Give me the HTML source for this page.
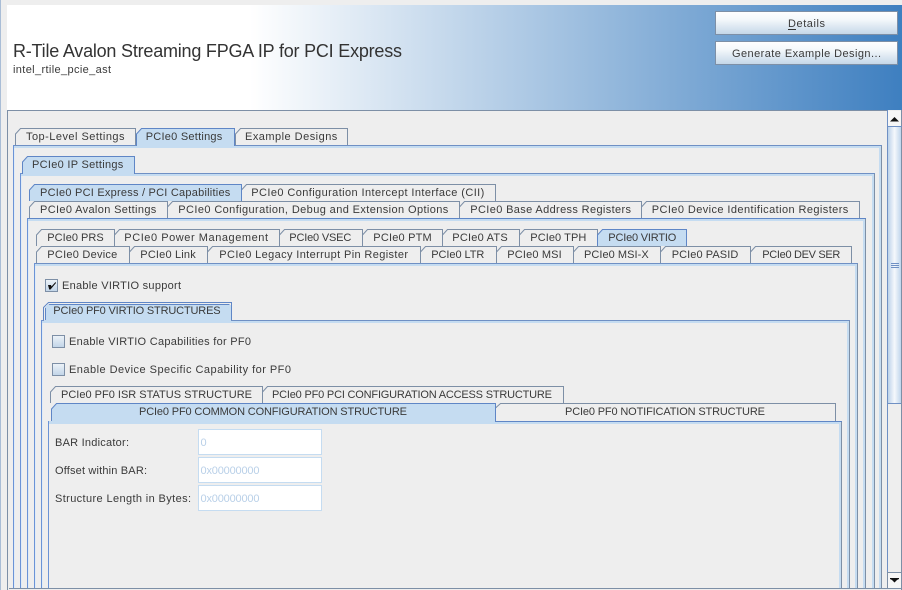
<!DOCTYPE html>
<html><head><meta charset="utf-8"><style>
html,body{margin:0;padding:0;background:#eee;width:902px;height:590px;overflow:hidden}
svg{display:block;font-family:"Liberation Sans",sans-serif;font-size:11px;fill:#3a3a3a}
.t{fill:#eee;stroke:#7d8fa6;stroke-width:1}
.s{fill:#c5dcf1;stroke:#5f86c6;stroke-width:1}
</style></head><body>
<svg width="902" height="590" viewBox="0 0 902 590" xmlns="http://www.w3.org/2000/svg">
<defs>
<linearGradient id="h" gradientUnits="userSpaceOnUse" x1="250" y1="0" x2="902" y2="0"><stop offset="0" stop-color="#fff"/><stop offset="1" stop-color="#3e7fc0"/></linearGradient>
<linearGradient id="b" x1="0" y1="0" x2="0" y2="1"><stop offset="0" stop-color="#fff"/><stop offset="0.35" stop-color="#f4f8fb"/><stop offset="1" stop-color="#c3d6e8"/></linearGradient>
<linearGradient id="c" x1="0" y1="0" x2="0" y2="1"><stop offset="0" stop-color="#eef3f8"/><stop offset="1" stop-color="#c0d4e8"/></linearGradient>
<linearGradient id="th" x1="0" y1="0" x2="1" y2="0"><stop offset="0" stop-color="#bcd2ea"/><stop offset="0.5" stop-color="#f5f8fc"/><stop offset="1" stop-color="#c0d5ec"/></linearGradient>
</defs>
<rect width="902" height="590" fill="#eee"/>
<rect x="0" y="0" width="1" height="590" fill="#a9bdd6"/>
<rect x="7" y="5" width="895" height="105" fill="url(#h)"/>
<rect x="7" y="5" width="243" height="105" fill="#fff"/>
<rect x="7" y="110" width="894" height="1" fill="#7d8fa6"/>
<rect x="7" y="110" width="1" height="480" fill="#7d8fa6"/>

<text x="13" y="57" textLength="389" style="font-size:18px;fill:#333">R-Tile Avalon Streaming FPGA IP for PCI Express</text>
<text x="13" y="73" textLength="98">intel_rtile_pcie_ast</text>

<rect x="715.5" y="11.5" width="182" height="23" fill="url(#b)" stroke="#7d8fa6"/>
<text x="788" y="27" textLength="37">Details</text>
<rect x="788" y="29" width="8" height="1" fill="#333"/>
<rect x="715.5" y="41.5" width="182" height="23" fill="url(#b)" stroke="#7d8fa6"/>
<text x="732" y="57" textLength="149">Generate Example Design...</text>

<g shape-rendering="crispEdges">
<rect x="13" y="145" width="869" height="443" fill="#7d8fa6"/><rect x="14" y="146" width="867" height="442" fill="#c5dcf1"/><rect x="15" y="148" width="864" height="440" fill="#eee"/><rect x="14" y="148" width="1" height="440" fill="#e0ebf6"/><rect x="13" y="145" width="869" height="1" fill="#6f90c4"/><rect x="13" y="145" width="1" height="443" fill="#6b93d6"/>
<rect x="20" y="173" width="855" height="415" fill="#7d8fa6"/><rect x="21" y="174" width="853" height="414" fill="#c5dcf1"/><rect x="22" y="176" width="850" height="412" fill="#eee"/><rect x="21" y="176" width="1" height="412" fill="#e0ebf6"/><rect x="20" y="173" width="855" height="1" fill="#6f90c4"/><rect x="20" y="173" width="1" height="415" fill="#6b93d6"/>
<rect x="27" y="218" width="839" height="370" fill="#7d8fa6"/><rect x="28" y="219" width="837" height="369" fill="#c5dcf1"/><rect x="29" y="221" width="834" height="367" fill="#eee"/><rect x="28" y="221" width="1" height="367" fill="#e0ebf6"/><rect x="27" y="218" width="839" height="1" fill="#5f86c6"/><rect x="27" y="218" width="1" height="370" fill="#6b93d6"/>
<rect x="34" y="263" width="824" height="325" fill="#7d8fa6"/><rect x="35" y="264" width="822" height="324" fill="#c5dcf1"/><rect x="36" y="266" width="819" height="322" fill="#eee"/><rect x="35" y="266" width="1" height="322" fill="#e0ebf6"/><rect x="34" y="263" width="824" height="1" fill="#6f90c4"/><rect x="34" y="263" width="1" height="325" fill="#6b93d6"/>
<rect x="41" y="320" width="809" height="268" fill="#7d8fa6"/><rect x="42" y="321" width="807" height="267" fill="#c5dcf1"/><rect x="43" y="323" width="804" height="265" fill="#eee"/><rect x="42" y="323" width="1" height="265" fill="#e0ebf6"/><rect x="41" y="320" width="809" height="1" fill="#6f90c4"/><rect x="41" y="320" width="1" height="268" fill="#6b93d6"/>
<rect x="48" y="421" width="794" height="167" fill="#7d8fa6"/><rect x="49" y="422" width="792" height="166" fill="#c5dcf1"/><rect x="49" y="424" width="790" height="164" fill="#eee"/><rect x="48" y="421" width="794" height="1" fill="#5f86c6"/><rect x="48" y="421" width="1" height="167" fill="#6b93d6"/>
<rect x="9" y="588" width="879" height="1" fill="#7d8fa6"/>
</g>

<!-- row 1 -->
<path class="t" d="M15.5 145V134L20.5 128.5H135.5V145"/>
<path class="t" d="M235.500 145V134L240.500 128.500H347.500V145"/>
<path class="s" d="M136.500 146V134L141.500 128.500H234.500V146"/>
<rect x="137" y="145" width="97" height="3" fill="#c5dcf1"/>
<text x="26" y="140" textLength="98.500">Top-Level Settings</text>
<text x="145.700" y="140" textLength="76.600">PCIe0 Settings</text>
<text x="245" y="140" textLength="92.300">Example Designs</text>

<!-- row 2 -->
<path class="s" d="M22.500 174V162L27.500 156.500H134.500V174"/>
<rect x="23" y="173" width="111" height="3" fill="#c5dcf1"/>
<text x="32" y="168" textLength="91.300">PCIe0 IP Settings</text>

<!-- row 3 -->
<path class="t" d="M241.500 201V190L246.500 184.500H495.500V201"/>
<path class="s" d="M29.500 201V190L34.500 184.500H241.500V201"/>
<text x="40" y="196" textLength="190.300">PCIe0 PCI Express / PCI Capabilities</text>
<text x="251.300" y="196" textLength="233">PCIe0 Configuration Intercept Interface (CII)</text>
<path class="t" d="M29.500 218V207L34.500 201.500H167.500V218"/>
<path class="t" d="M167.500 218V207L172.500 201.500H459.500V218"/>
<path class="t" d="M459.500 218V207L464.500 201.500H641.500V218"/>
<path class="t" d="M641.500 218V207L646.500 201.500H859.500V218"/>
<text x="40" y="213" textLength="116.300">PCIe0 Avalon Settings</text>
<text x="178.300" y="213" textLength="270">PCIe0 Configuration, Debug and Extension Options</text>
<text x="470.300" y="213" textLength="160.700">PCIe0 Base Address Registers</text>
<text x="651.700" y="213" textLength="196.600">PCIe0 Device Identification Registers</text>

<!-- row 4 -->
<path class="t" d="M36.500 246V235L41.500 229.500H114.500V246"/>
<path class="t" d="M114.500 246V235L119.500 229.500H279.500V246"/>
<path class="t" d="M279.500 246V235L284.500 229.500H362.500V246"/>
<path class="t" d="M362.500 246V235L367.500 229.500H442.500V246"/>
<path class="t" d="M442.500 246V235L447.500 229.500H519.500V246"/>
<path class="t" d="M519.500 246V235L524.500 229.500H597.500V246"/>
<path class="s" d="M597.500 246V235L602.500 229.500H686.500V246"/>
<text x="47.300" y="241" textLength="56.400">PCIe0 PRS</text>
<text x="124.300" y="241" textLength="143.700">PCIe0 Power Management</text>
<text x="289.300" y="241" textLength="62">PCIe0 VSEC</text>
<text x="373.300" y="241" textLength="58.400">PCIe0 PTM</text>
<text x="452.300" y="241" textLength="55.400">PCIe0 ATS</text>
<text x="530.300" y="241" textLength="56">PCIe0 TPH</text>
<text x="608.300" y="241" textLength="68">PCIe0 VIRTIO</text>

<!-- row 5 -->
<path class="t" d="M36.500 263V252L41.500 246.500H129.500V263"/>
<path class="t" d="M129.500 263V252L134.500 246.500H207.500V263"/>
<path class="t" d="M207.500 263V252L212.500 246.500H420.500V263"/>
<path class="t" d="M420.500 263V252L425.500 246.500H496.500V263"/>
<path class="t" d="M496.500 263V252L501.500 246.500H573.500V263"/>
<path class="t" d="M573.500 263V252L578.500 246.500H660.500V263"/>
<path class="t" d="M660.500 263V252L665.500 246.500H750.500V263"/>
<path class="t" d="M750.500 263V252L755.500 246.500H851.500V263"/>
<text x="47.300" y="258" textLength="70">PCIe0 Device</text>
<text x="140.300" y="258" textLength="55.400">PCIe0 Link</text>
<text x="219.300" y="258" textLength="188.700">PCIe0 Legacy Interrupt Pin Register</text>
<text x="431.300" y="258" textLength="53">PCIe0 LTR</text>
<text x="507.300" y="258" textLength="54.400">PCIe0 MSI</text>
<text x="584" y="258" textLength="64.700">PCIe0 MSI-X</text>
<text x="671.700" y="258" textLength="66.600">PCIe0 PASID</text>
<text x="762.300" y="258" textLength="78">PCIe0 DEV SER</text>

<!-- Enable VIRTIO -->
<rect x="45.500" y="279.500" width="12" height="12" fill="url(#c)" stroke="#7d8fa6"/>
<path d="M48 285H51L51.500 286.500L55.500 282L56 283L50.500 289.500H49.200Z" fill="#111"/>
<text x="62" y="289" textLength="119">Enable VIRTIO support</text>

<!-- structures tab -->
<path d="M43.500 320V307.500L48.500 302.500H231.500V320" fill="#eee" stroke="#5f86c6"/>
<path d="M45.500 320V308.500L49.500 304.500H229.500" fill="#c5dcf1" stroke="#5f86c6"/>
<rect x="46" y="305" width="185" height="18" fill="#c5dcf1"/>
<rect x="229" y="305" width="2" height="15" fill="#c5dcf1"/>
<rect x="44" y="320" width="187" height="3" fill="#c5dcf1"/>
<text x="53.300" y="314" textLength="167.300">PCIe0 PF0 VIRTIO STRUCTURES</text>

<rect x="52.500" y="335.500" width="12" height="12" fill="url(#c)" stroke="#7d8fa6"/>
<text x="69" y="345" textLength="182">Enable VIRTIO Capabilities for PF0</text>
<rect x="52.500" y="363.500" width="12" height="12" fill="url(#c)" stroke="#7d8fa6"/>
<text x="69" y="373" textLength="222">Enable Device Specific Capability for PF0</text>

<!-- inner tabs -->
<path class="t" d="M50.500 403V392L55.500 386.500H262.500V403"/>
<path class="t" d="M262.500 403V392L267.500 386.500H563.500V403"/>
<text x="61" y="398" textLength="191">PCIe0 PF0 ISR STATUS STRUCTURE</text>
<text x="272" y="398" textLength="280">PCIe0 PF0 PCI CONFIGURATION ACCESS STRUCTURE</text>
<path class="t" d="M495.500 421V408L500.500 403.500H835.500V421"/>
<path class="s" d="M51.500 421V409L56.500 403.500H495.500V421"/>
<rect x="49" y="421" width="446" height="3" fill="#c5dcf1"/>
<text x="139" y="415" textLength="268">PCIe0 PF0 COMMON CONFIGURATION STRUCTURE</text>
<text x="565" y="415" textLength="200">PCIe0 PF0 NOTIFICATION STRUCTURE</text>

<!-- form -->
<text x="55" y="446" textLength="74">BAR Indicator:</text>
<text x="55" y="474" textLength="92">Offset within BAR:</text>
<text x="55" y="502" textLength="136">Structure Length in Bytes:</text>
<rect x="198.500" y="429.500" width="123" height="25" fill="#fff" stroke="#c5dcf1"/>
<rect x="198.500" y="457.500" width="123" height="25" fill="#fff" stroke="#c5dcf1"/>
<rect x="198.500" y="485.500" width="123" height="25" fill="#fff" stroke="#c5dcf1"/>
<text x="200.500" y="446" style="fill:#b9d0e8">0</text>
<text x="200.500" y="474" textLength="59" style="fill:#b9d0e8">0x00000000</text>
<text x="200.500" y="502" textLength="59" style="fill:#b9d0e8">0x00000000</text>

<!-- scrollbar -->
<rect x="887" y="110" width="15" height="480" fill="#eee"/>
<rect x="901" y="110" width="1" height="480" fill="#7d8fa6"/>
<rect x="888" y="111" width="13" height="15" fill="#f6f6f6"/>
<rect x="887" y="126" width="15" height="1" fill="#6f90c4"/>
<path d="M890 121.500L894.500 117L899 121.500Z" fill="#111"/>
<rect x="888" y="127" width="13" height="276" fill="url(#th)"/>
<rect x="888" y="403" width="13" height="1" fill="#6f90c4"/>
<rect x="887" y="110" width="1" height="462" fill="#6f90c4"/>
<rect x="891" y="263" width="8" height="1" fill="#6f90c4"/>
<rect x="891" y="265" width="8" height="1" fill="#6f90c4"/>
<rect x="891" y="267" width="8" height="1" fill="#6f90c4"/>
<rect x="887" y="572" width="1" height="17" fill="#7d8fa6"/>
<rect x="888" y="572" width="13" height="1" fill="#7d8fa6"/>
<rect x="888" y="573" width="13" height="15" fill="#f6f6f6"/>
<path d="M890 578H899V579L897 580L894.500 582.500L892 580L890 579Z" fill="#111"/>
<rect x="887" y="588" width="15" height="1" fill="#7d8fa6"/>
</svg>
</body></html>
